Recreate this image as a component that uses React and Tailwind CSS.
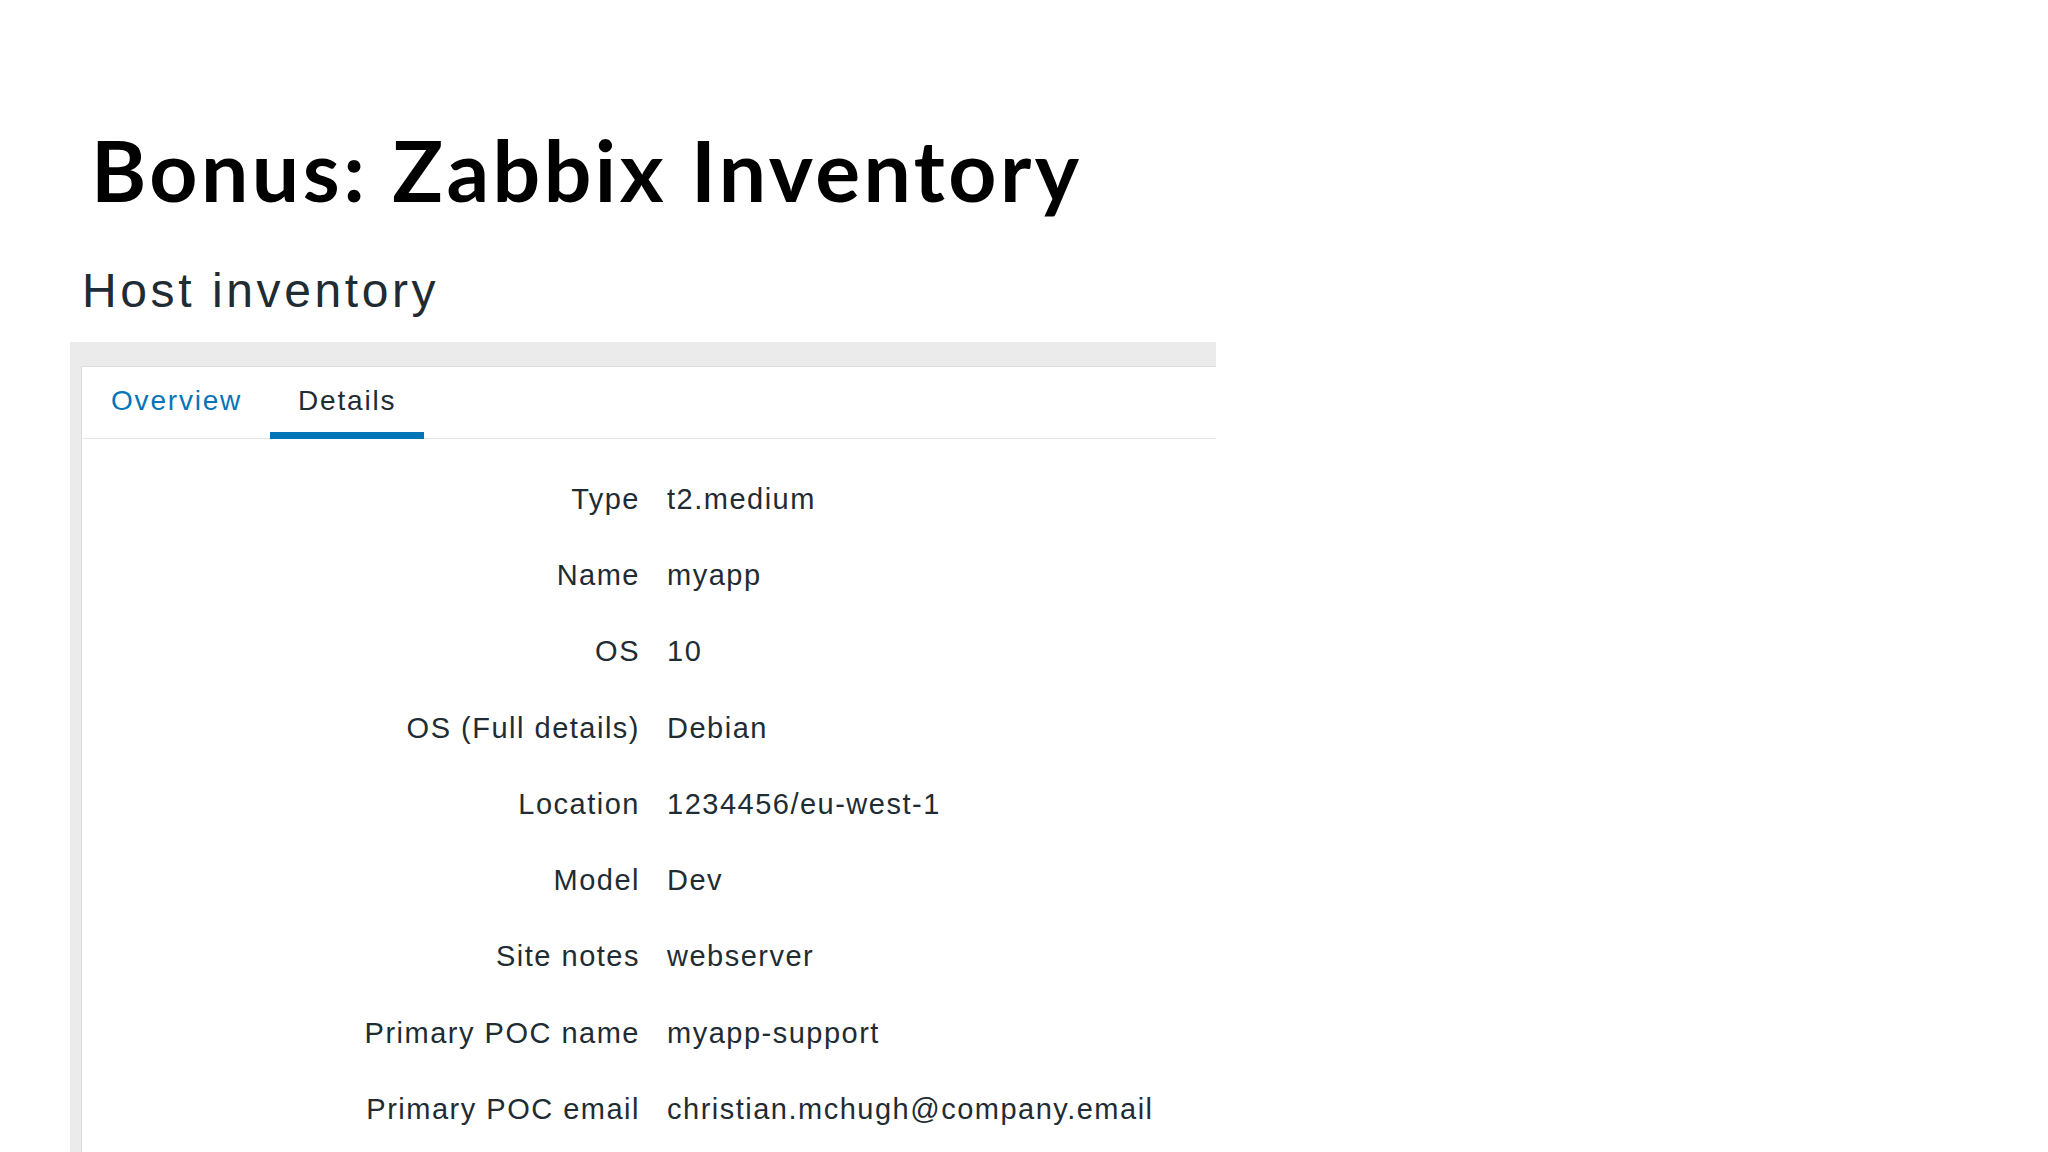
export default function App() {
  const rows = [
    ["Type", "t2.medium"],
    ["Name", "myapp"],
    ["OS", "10"],
    ["OS (Full details)", "Debian"],
    ["Location", "1234456/eu-west-1"],
    ["Model", "Dev"],
    ["Site notes", "webserver"],
    ["Primary POC name", "myapp-support"],
    ["Primary POC email", "christian.mchugh@company.email"],
  ];
  return (
    <div className="w-[2048px] h-[1152px] bg-white overflow-hidden flex flex-col">
      <h1 className="pl-[91px] pt-[128px] text-[84px] leading-none font-bold tracking-[3.5px] text-black font-['Lato','Liberation_Sans',sans-serif] whitespace-nowrap">
        Bonus: Zabbix Inventory
      </h1>
      <h2 className="pl-[82px] mt-[55px] text-[48px] leading-none tracking-[3.6px] text-[#1f2c33] font-['Liberation_Sans',Arial,sans-serif] whitespace-nowrap">
        Host inventory
      </h2>
      <div className="ml-[70px] mt-[27px] w-[1146px] flex-1 bg-[#ebebeb] pt-[24px] pl-[11px] flex flex-col font-['Liberation_Sans',Arial,sans-serif]">
        <div className="flex-1 bg-white border-l border-t border-[#dcdcdc] flex flex-col">
          <div className="h-[72px] border-b border-[#e6e6e6] flex pl-[1px] text-[28px] leading-none tracking-[1.8px]">
            <div className="px-[28px] pt-[20px] text-[#0275b8]">Overview</div>
            <div className="relative px-[28px] pt-[20px] text-[#1f2c33]">
              Details
              <span className="absolute left-0 right-0 bottom-[-1px] h-[7px] bg-[#0275b8]"></span>
            </div>
          </div>
          <div className="pt-[22px] flex flex-col text-[29px] leading-none tracking-[1.5px] text-[#1f2c33]">
            {rows.map(([k, v]) => (
              <div key={k} className="h-[76.3px] grid grid-cols-[558px_1fr] gap-x-[27px] items-center">
                <div className="text-right whitespace-nowrap">{k}</div>
                <div className="whitespace-nowrap">{v}</div>
              </div>
            ))}
          </div>
        </div>
      </div>
    </div>
  );
}
